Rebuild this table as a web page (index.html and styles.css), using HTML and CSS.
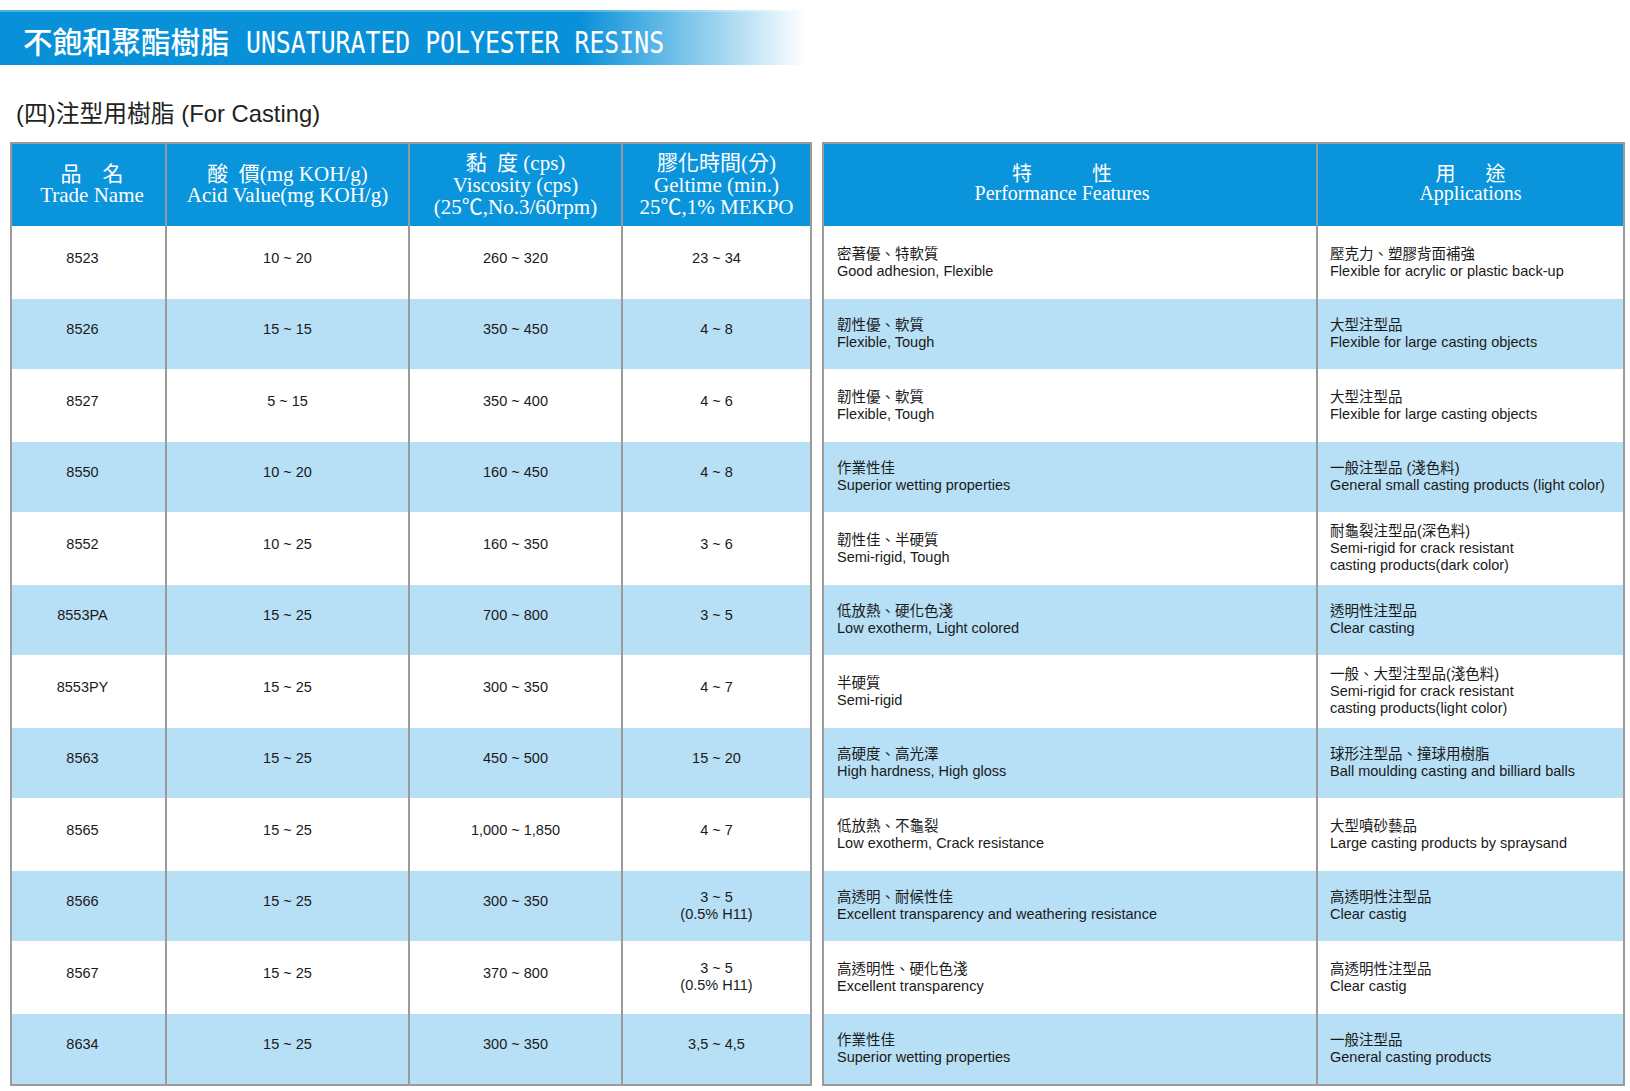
FILE: index.html
```html
<!DOCTYPE html>
<html lang="zh-Hant">
<head>
<meta charset="utf-8">
<title>不飽和聚酯樹脂 UNSATURATED POLYESTER RESINS</title>
<link rel="stylesheet" href="styles.css">
</head>
<body>
<div class="banner">
  <span class="banner-zh">不飽和聚酯樹脂</span><span class="banner-en">UNSATURATED POLYESTER RESINS</span>
</div>
<h2 class="subtitle">(四)注型用樹脂 (For Casting)</h2>
<div class="tables">
  <div class="grid grid-left">
    <div class="hd two hd-first">品　名<br>Trade Name</div>
    <div class="hd two">酸&ensp;價(mg KOH/g)<br>Acid Value(mg KOH/g)</div>
    <div class="hd three">黏&ensp;度 (cps)<br>Viscosity (cps)<br>(25℃,No.3/60rpm)</div>
    <div class="hd three">膠化時間(分)<br>Geltime (min.)<br>25℃,1% MEKPO</div>

    <div class="c first">8523</div><div class="c">10 ~ 20</div><div class="c">260 ~ 320</div><div class="c">23 ~ 34</div>
    <div class="c first b">8526</div><div class="c b">15 ~ 15</div><div class="c b">350 ~ 450</div><div class="c b">4 ~ 8</div>
    <div class="c first">8527</div><div class="c">5 ~ 15</div><div class="c">350 ~ 400</div><div class="c">4 ~ 6</div>
    <div class="c first b">8550</div><div class="c b">10 ~ 20</div><div class="c b">160 ~ 450</div><div class="c b">4 ~ 8</div>
    <div class="c first">8552</div><div class="c">10 ~ 25</div><div class="c">160 ~ 350</div><div class="c">3 ~ 6</div>
    <div class="c first b">8553PA</div><div class="c b">15 ~ 25</div><div class="c b">700 ~ 800</div><div class="c b">3 ~ 5</div>
    <div class="c first">8553PY</div><div class="c">15 ~ 25</div><div class="c">300 ~ 350</div><div class="c">4 ~ 7</div>
    <div class="c first b">8563</div><div class="c b">15 ~ 25</div><div class="c b">450 ~ 500</div><div class="c b">15 ~ 20</div>
    <div class="c first">8565</div><div class="c">15 ~ 25</div><div class="c">1,000 ~ 1,850</div><div class="c">4 ~ 7</div>
    <div class="c first b">8566</div><div class="c b">15 ~ 25</div><div class="c b">300 ~ 350</div><div class="c b multi">3 ~ 5<br>(0.5% H11)</div>
    <div class="c first">8567</div><div class="c">15 ~ 25</div><div class="c">370 ~ 800</div><div class="c multi">3 ~ 5<br>(0.5% H11)</div>
    <div class="c first b">8634</div><div class="c b">15 ~ 25</div><div class="c b">300 ~ 350</div><div class="c b">3,5 ~ 4,5</div>
  </div>

  <div class="grid grid-right">
    <div class="hd hd-r hd-feat">特　　　性<br>Performance Features</div>
    <div class="hd hd-r">用&emsp;&ensp;途<br>Applications</div>

    <div class="t feat">密著優、特軟質<br>Good adhesion, Flexible</div>
    <div class="t app">壓克力、塑膠背面補強<br>Flexible for acrylic or plastic back-up</div>

    <div class="t feat b">韌性優、軟質<br>Flexible, Tough</div>
    <div class="t app b">大型注型品<br>Flexible for large casting objects</div>

    <div class="t feat">韌性優、軟質<br>Flexible, Tough</div>
    <div class="t app">大型注型品<br>Flexible for large casting objects</div>

    <div class="t feat b">作業性佳<br>Superior wetting properties</div>
    <div class="t app b">一般注型品 (淺色料)<br>General small casting products (light color)</div>

    <div class="t feat">韌性佳、半硬質<br>Semi-rigid, Tough</div>
    <div class="t app">耐龜裂注型品(深色料)<br>Semi-rigid for crack resistant<br>casting products(dark color)</div>

    <div class="t feat b">低放熱、硬化色淺<br>Low exotherm, Light colored</div>
    <div class="t app b">透明性注型品<br>Clear casting</div>

    <div class="t feat">半硬質<br>Semi-rigid</div>
    <div class="t app">一般、大型注型品(淺色料)<br>Semi-rigid for crack resistant<br>casting products(light color)</div>

    <div class="t feat b">高硬度、高光澤<br>High hardness, High gloss</div>
    <div class="t app b">球形注型品、撞球用樹脂<br>Ball moulding casting and billiard balls</div>

    <div class="t feat">低放熱、不龜裂<br>Low exotherm, Crack resistance</div>
    <div class="t app">大型噴砂藝品<br>Large casting products by spraysand</div>

    <div class="t feat b">高透明、耐候性佳<br>Excellent transparency and weathering resistance</div>
    <div class="t app b">高透明性注型品<br>Clear castig</div>

    <div class="t feat">高透明性、硬化色淺<br>Excellent transparency</div>
    <div class="t app">高透明性注型品<br>Clear castig</div>

    <div class="t feat b">作業性佳<br>Superior wetting properties</div>
    <div class="t app b">一般注型品<br>General casting products</div>
  </div>
</div>
</body>
</html>
```

FILE: styles.css
```css
html, body {
  margin: 0;
  padding: 0;
  background: #ffffff;
}

body {
  font-family: "Liberation Sans", "Noto Sans CJK TC", sans-serif;
  color: #1a1a1a;
}

.banner {
  margin-top: 10px;
  width: 806px;
  height: 55px;
  box-sizing: border-box;
  padding-left: 23px;
  display: flex;
  align-items: baseline;
  white-space: nowrap;
  overflow: hidden;
  color: #ffffff;
  background:
    linear-gradient(to bottom, rgba(255, 255, 255, 0.28) 0, rgba(255, 255, 255, 0.28) 2px, rgba(255, 255, 255, 0) 2px),
    linear-gradient(90deg, #0891d9 0, #0891d9 72%, #ffffff 100%);
}

.banner-zh {
  font-family: "Noto Sans CJK TC", sans-serif;
  font-weight: 500;
  font-size: 29.5px;
  line-height: 55px;
  padding-top: 3px;
}

.banner-en {
  display: inline-block;
  margin-left: 16px;
  font-family: "DejaVu Sans Mono", "Liberation Mono", monospace;
  font-size: 31px;
  line-height: 55px;
  transform: scaleX(0.8);
  transform-origin: left center;
}

.subtitle {
  margin: 34px 0 13px 16px;
  font-weight: normal;
  font-size: 23.8px;
  line-height: 30px;
  color: #222222;
  font-family: "Liberation Sans", "Noto Sans CJK TC", sans-serif;
}

.tables {
  display: flex;
  gap: 10px;
  margin-left: 10px;
}

.grid {
  display: grid;
  column-gap: 2px;
  padding: 2px;
  background: #9b9b9b;
  grid-template-rows: 82px repeat(6, 73px 70px);
}

.grid-left {
  grid-template-columns: 153px 241px 211px 187px;
}

.grid-right {
  grid-template-columns: 492px 305px;
}

.hd {
  background: #0a94dc;
  color: #ffffff;
  font-family: "Liberation Serif", "Noto Sans CJK TC", serif;
  font-size: 21px;
  text-align: center;
  display: flex;
  align-items: center;
  justify-content: center;
  box-sizing: border-box;
}

.hd.two {
  line-height: 21px;
}

.hd.three {
  line-height: 22px;
}

.hd-first {
  padding-left: 7px;
}

.hd-r {
  font-size: 20px;
  line-height: 19px;
  padding-bottom: 2px;
}

.hd-feat {
  padding-right: 16px;
}

.c, .t {
  background: #ffffff;
  font-size: 14.5px;
  line-height: 17px;
  display: flex;
  align-items: center;
}

.c {
  justify-content: center;
  text-align: center;
  padding-bottom: 9px;
  box-sizing: border-box;
}

.c.first {
  padding-right: 12px;
}

.c.multi {
  padding-bottom: 1px;
}

.t {
  text-align: left;
}

.feat {
  padding-left: 13px;
}

.app {
  padding-left: 12px;
}

.b {
  background: #b7dff5;
}
```
